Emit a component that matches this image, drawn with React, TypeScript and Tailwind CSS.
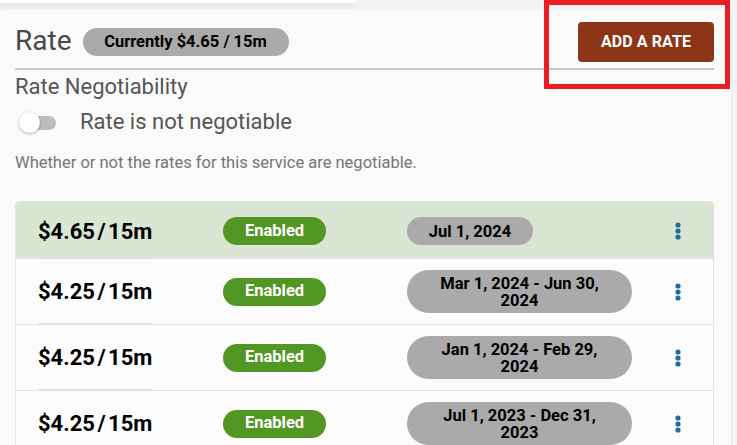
const rates = [
  { price: '$4.65', lines: ['Jul 1, 2024'], current: true },
  { price: '$4.25', lines: ['Mar 1, 2024 - Jun 30,', '2024'] },
  { price: '$4.25', lines: ['Jan 1, 2024 - Feb 29,', '2024'] },
  { price: '$4.25', lines: ['Jul 1, 2023 - Dec 31,', '2023'] },
];

function Kebab() {
  return (
    <svg width="6" height="18" viewBox="0 0 6 18" className="text-[#1f6c9f]">
      <circle cx="3" cy="3" r="2.6" fill="currentColor" />
      <circle cx="3" cy="9" r="2.6" fill="currentColor" />
      <circle cx="3" cy="15" r="2.6" fill="currentColor" />
    </svg>
  );
}

export default function App() {
  return (
    <div className="relative w-[737px] h-[445px] overflow-hidden bg-[#f3f3f3] font-['Roboto',sans-serif]">
      <div className="h-[3px] w-[357px] bg-white shadow-[0_2px_6px_rgba(0,0,0,0.10)]" />
      <div className="mt-[7px] w-[732px] h-[435px] bg-[#fafafa] border-r border-[#e9e9e9] pl-[15px] pr-[17px]">
        {/* header */}
        <div className="pt-[12px] flex items-center justify-between h-[52px]">
          <div className="flex items-center gap-[11px]">
            <h2 className="text-[28px] leading-[32px] text-[#484848] -mt-[3px]">Rate</h2>
            <span className="rounded-full bg-[#aaaaaa] h-[28px] w-[206px] flex items-center justify-center text-[16.5px] font-bold text-black">
              Currently $4.65 / 15m
            </span>
          </div>
          <button className="h-[40px] w-[136px] rounded-[4px] bg-[#8d3518] text-white text-[16px] font-bold uppercase tracking-[0.1px]">
            Add a Rate
          </button>
        </div>
        <div className="mt-[6px] h-[2px] bg-[#c6c6c6]" />

        <div className="mt-[4px] text-[22px] leading-[26px] text-[#555555]">Rate Negotiability</div>
        <div className="mt-[8px] h-[28px] flex items-center">
          <div className="relative ml-[4px] w-[37px] h-[21px]">
            <div className="absolute left-[3px] top-[4px] w-[34px] h-[14px] rounded-full bg-[#bdbdbd]" />
            <div className="absolute left-0 top-0 w-[21px] h-[21px] rounded-full bg-white shadow-[0_1px_3px_rgba(0,0,0,0.3)]" />
          </div>
          <span className="ml-[24px] text-[22px] leading-[26px] text-[#555555]">Rate is not negotiable</span>
        </div>
        <p className="mt-[17px] text-[16.5px] leading-[20px] text-[#757575]">
          Whether or not the rates for this service are negotiable.
        </p>

        {/* rates table */}
        <div className="mt-[28px] border border-[#e0e2e6] rounded-t-[4px] overflow-hidden">
          {rates.map((r, i) => (
            <div
              key={i}
              className={`relative flex items-center ${
                r.current ? 'h-[56px] pt-[2px] bg-[#d9e6d3]' : 'h-[66px] border-t border-[#e0e2e6] bg-[#fcfcfc]'
              }`}
            >
              <div className="w-[207px] pl-[22px] text-[22px] font-bold text-black">
                {r.price}
                <span className="mx-[2.5px]">/</span>
                15m
              </div>
              <div className="w-[184px]">
                <span className="inline-flex items-center justify-center w-[103px] h-[28px] rounded-full bg-[#529624] text-white text-[16.5px] font-bold">
                  Enabled
                </span>
              </div>
              <div className="w-[268px]">
                <span
                  className={`inline-flex flex-col items-center justify-center rounded-full bg-[#aaaaaa] text-black text-[16.5px] font-bold leading-[17px] ${
                    r.lines.length === 1 ? 'w-[126px] h-[28px]' : 'w-[225px] h-[43px]'
                  }`}
                >
                  {r.lines.map((l) => (
                    <span key={l}>{l}</span>
                  ))}
                </span>
              </div>
              <Kebab />
              <span className="absolute left-[22px] bottom-[-1px] w-[114px] h-[2px] bg-[#dcdfe4]" />
            </div>
          ))}
        </div>
      </div>

      {/* highlight box */}
      <div className="absolute left-[544px] top-0 w-[186px] h-[89px] border-[5px] border-[#ed1c24]" />
    </div>
  );
}
